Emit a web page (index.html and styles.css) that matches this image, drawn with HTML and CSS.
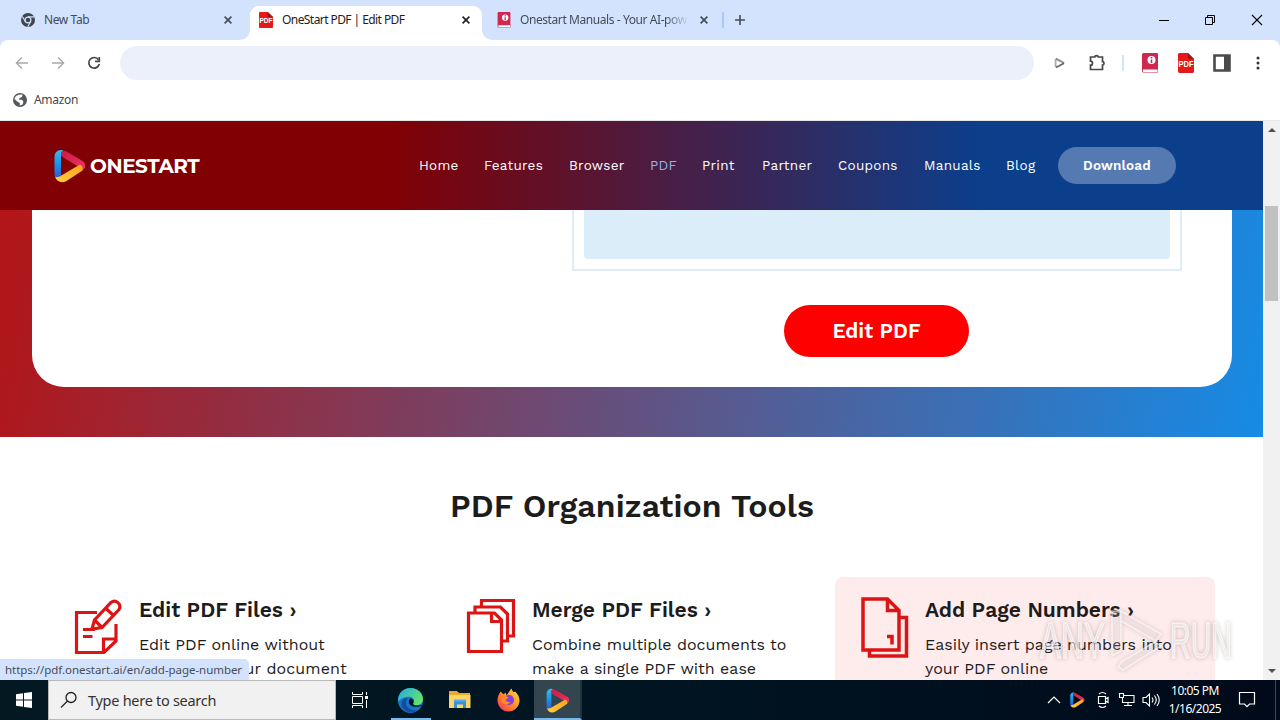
FILE: index.html
```html
<!DOCTYPE html>
<html lang="en">
<head>
<meta charset="utf-8">
<title>OneStart PDF | Edit PDF</title>
<link rel="stylesheet" href="styles.css">
</head>
<body>
<svg class="defs" width="0" height="0">
  <defs>
    <linearGradient id="lb" x1="0" y1="0" x2="0" y2="1"><stop offset="0" stop-color="#3cb8e8"/><stop offset=".5" stop-color="#1595ee"/><stop offset="1" stop-color="#3b4fc0"/></linearGradient>
    <linearGradient id="lr" x1="0" y1="0" x2="1" y2="1"><stop offset="0" stop-color="#c81a4c"/><stop offset="1" stop-color="#f0345c"/></linearGradient>
    <linearGradient id="ly" x1="0" y1="1" x2="1" y2="0"><stop offset="0" stop-color="#ffd23e"/><stop offset="1" stop-color="#ff9f1e"/></linearGradient>
    <symbol id="onestart" viewBox="0 0 32 34">
      <path d="M7 1C3 1 .5 4 .5 8v17c0 3 2 5.500 5 5L7 26V6c0-2 1-3.500 3-3.800C9 1.300 8 1 7 1z" fill="url(#lb)"/>
      <path d="M7 7V3.500C8 1.500 10.500 1.400 12.500 2.600L28.500 12c3 2 3.500 6 1 8.500L26 18.500 7 7z" fill="url(#lr)"/>
      <path d="M1 27.500c1.500 1 4 .5 5.500-.5L26 15.500c2 1.200 3.500 3.500 2.500 6L12.500 32C8 34.500 2.500 33 1 27.500z" fill="url(#ly)"/>
    </symbol>
    <symbol id="pdf" viewBox="0 0 16 18" preserveAspectRatio="none"><path d="M0 1.500C0 .5.500 0 1.500 0H10l6 5.500v11c0 1-.5 1.500-1.500 1.500h-13C.5 18 0 17.500 0 16.500z" fill="#e51a18"/><path d="M10 0l6 5.500h-6z" fill="#a90f10"/><text x="8" y="12.500" text-anchor="middle" class="pdf-label">PDF</text></symbol>
    <symbol id="book" viewBox="0 0 16 20"><path d="M1.500 0H15q1 0 1 1v18.500H1.500Q0 19.500 0 18V1.500Q0 0 1.500 0z" fill="#cf2850"/><path d="M1 16.500h14.500V19H1z" fill="#fff"/><circle cx="9.500" cy="7" r="4" fill="#fff"/><path d="M9.500 4v1.500M9.500 6.500V10" stroke="#cf2850" stroke-width="1.600"/></symbol>
    <symbol id="x" viewBox="0 0 10 10"><path d="M1.600 1.600l6.800 6.800M8.400 1.600L1.600 8.400" stroke="currentColor" stroke-width="1.600"/></symbol>
  </defs>
</svg>
<div class="screen">
  <div class="tabs">
    <div class="tab tab-first">
      <svg class="ico14" viewBox="0 0 14 14"><circle cx="7" cy="7" r="7" fill="#3f464f"/><circle cx="7" cy="7" r="2.900" fill="#3f464f" stroke="#d3e3fd" stroke-width="1.200"/><path d="M7 3.900h6.300M4.300 8.500L1.300 3.500M9.700 8.500l-3 5.300" stroke="#d3e3fd" stroke-width="1.100"/></svg>
      <span class="tab-title t-new">New Tab</span><svg class="close"><use href="#x"/></svg>
    </div>
    <div class="tab tab-active">
      <svg class="fav"><use href="#pdf"/></svg>
      <span class="tab-title t-pdf">OneStart PDF | Edit PDF</span><svg class="close"><use href="#x"/></svg>
    </div>
    <div class="tab tab-last">
      <svg class="fav"><use href="#book"/></svg>
      <span class="tab-title t-man">Onestart Manuals - Your AI-pow</span><svg class="close"><use href="#x"/></svg>
    </div>
    <div class="tab-sep"></div>
    <svg class="plus" viewBox="0 0 12 12"><path d="M6 1v10M1 6h10" stroke="#444a53" stroke-width="1.600"/></svg>
    <div class="winctl">
      <svg width="10" height="12"><path d="M0 6.500h10" stroke="#000"/></svg>
      <svg width="12" height="12" fill="none" stroke="#000"><path d="M1.500 3.500h7v7h-7zM3.500 3.500v-2h7v7h-2"/></svg>
      <svg width="12" height="12"><path d="M1 1l10 10M11 1L1 11" stroke="#000" stroke-width="1.100"/></svg>
    </div>
  </div>
  <div class="toolwrap"><div class="toolbar">
    <svg width="14" height="14" fill="none" stroke="#a9abae" stroke-width="1.500"><path d="M13 7H2M7 1.500L1.500 7 7 12.500"/></svg>
    <svg width="14" height="14" fill="none" stroke="#a9abae" stroke-width="1.500"><path d="M1 7h11M7 1.500L12.500 7 7 12.500"/></svg>
    <svg width="14" height="14" fill="none" stroke="#45474a" stroke-width="1.700"><path d="M11.500 3.800A5.300 5.300 0 1 0 12.300 8"/><path d="M12.300 1v4.300H8"/></svg>
    <div class="omnibox"></div>
    <svg class="t-play" width="12" height="12" fill="none" stroke-width="1.800"><path d="M1.600 10V2" stroke="#aaa"/><path d="M1.800 1.600L10 6" stroke="#888"/><path d="M10 6.300L2 10.500" stroke="#666"/></svg>
    <svg class="t-puz" width="20" height="18" fill="none" stroke="#45474a" stroke-width="1.700"><path d="M2.500 3h4.300a1.700 1.300 0 0 1 3.400 0H14.500v4.600a1.500 1.700 0 0 1 0 3.400v4.500h-12v-4.300a2 2 0 0 0 0-4z"/></svg>
    <div class="tool-sep"></div>
    <svg class="t-book" width="16" height="20"><use href="#book"/></svg>
    <svg class="t-pdficon" width="16" height="20"><use href="#pdf"/></svg>
    <svg class="t-panel" width="18" height="18"><path d="M1.500 1.500h15v15h-15z" fill="#fff" stroke="#4a4a4a" stroke-width="2.600"/><path d="M11 1h6v16h-6z" fill="#4a4a4a"/></svg>
    <svg class="t-dots" width="4" height="14" fill="#333"><circle cx="2" cy="2" r="1.500"/><circle cx="2" cy="7" r="1.500"/><circle cx="2" cy="12" r="1.500"/></svg>
  </div></div>
  <div class="bookmarks">
    <svg class="ico14" viewBox="0 0 14 14"><circle cx="7" cy="7" r="7" fill="#55585c"/><path d="M5.500 1.700L9.500 1.500 9 4 6.500 5 6 6.700H9l1.500 2-1 2.800-2.700 1V10L4.500 8.700 1.500 6C1.700 4 3.500 2.300 5.500 1.700z" fill="#fff"/></svg>
    <span>Amazon</span>
  </div>
  <div class="view">
    <div class="page">
      <header class="header">
        <div class="brand"><svg class="logo"><use href="#onestart"/></svg><span>ONESTART</span></div>
        <nav class="nav">
          <a>Home</a><a>Features</a><a>Browser</a><a class="current">PDF</a><a>Print</a><a>Partner</a><a>Coupons</a><a>Manuals</a><a>Blog</a>
        </nav>
        <a class="download">Download</a>
      </header>
      <section class="hero">
        <div class="card">
          <div class="dropzone"><div class="dropfill"></div></div>
          <a class="edit">Edit PDF</a>
        </div>
      </section>
      <section class="tools">
        <h2><span>PDF Organization Tools</span></h2>
        <div class="grid">
          <div class="tool">
            <svg class="ti" width="50" height="60" fill="none" stroke="#dc1414" stroke-width="3.200"><path d="M24 14.500H3.500v40H31l12-11.500V26M30.500 54V41H43"/><path d="M10 31.500h12M10 38.500h9.500"/><path d="M19 31l2.500-9L38 4.500a5.400 5.400 0 0 1 8 7L29 29.500zM32.500 10l8.500 8M21.500 22l7.500 7.500"/></svg>
            <div><h3>Edit PDF Files ›</h3><p>Edit PDF online without<br><span class="wide">converting your document</span></p></div>
          </div>
          <div class="tool">
            <svg class="ti" width="50" height="60" fill="none" stroke="#dc1414" stroke-width="3.200"><path d="M2.500 15h26l7 7v31.500h-33zM25.500 15.500v8h10M9 14.500V9h25.500l7 7V43h-5M15.500 8.500V2.500h32V38h-5"/></svg>
            <div><h3>Merge PDF Files ›</h3><p>Combine multiple documents to<br>make a single PDF with ease</p></div>
          </div>
          <div class="tool hover">
            <svg class="ti num" width="50" height="62" fill="none" stroke="#dc1414" stroke-width="3.500"><path d="M4 2h24.500l11.500 11.500V53H4zM28.500 2v11.500H40M10.500 53v6H47.500V20.500H40" /><path d="M28 39.500h5v8"/></svg>
            <div><h3>Add Page Numbers ›</h3><p>Easily insert page numbers into<br>your PDF online</p></div>
          </div>
        </div>
      </section>
    </div>
    <div class="scroll">
      <svg width="8" height="5"><path d="M0 5l4-4 4 4z" fill="#505050"/></svg>
      <div class="thumb"></div>
      <svg class="down" width="8" height="5"><path d="M0 0l4 4 4-4z" fill="#505050"/></svg>
    </div>
    <div class="status">https://pdf.onestart.ai/en/add-page-number</div>
    <svg class="watermark" width="210" height="70">
      <text x="1" y="50" textLength="65" lengthAdjust="spacingAndGlyphs">ANY</text>
      <path d="M73 3v45l9-5V17l-1-13zM82 3l40 23-5 7-35-20zM82 54l34-20 6 4-38 24-5-3z"/>
      <text x="131" y="50" textLength="62" lengthAdjust="spacingAndGlyphs">RUN</text>
    </svg>
  </div>
  <div class="taskbar">
    <div class="start"><svg width="16" height="16" fill="#fff"><path d="M0 2.200L7 1.200V7.500H0zM8 1l8-1v7.500H8zM0 8.500h7v6.300L0 13.800zM8 8.500h8V16l-8-1.100z"/></svg></div>
    <div class="search"><svg width="18" height="18" fill="none" stroke="#222" stroke-width="1.300"><circle cx="11" cy="6.500" r="5"/><path d="M7.500 10L1 16.500"/></svg><span>Type here to search</span></div>
    <div class="tk view-btn"><svg width="18" height="16" fill="none" stroke="#fff"><path d="M1.500 4.500h10v7h-10zM1.500 0v2.500h10V0M1.500 16v-2.500h10V16M15.500 0v3M15.500 8v8"/><path d="M14 4h3v3h-3z" fill="#fff" stroke="none"/></svg></div>
    <div class="tk run"><svg width="25" height="25" viewBox="0 0 24 24"><defs><linearGradient id="eg" x1="0" y1="0" x2="1" y2=".5"><stop offset="0" stop-color="#25a8e8"/><stop offset="1" stop-color="#63e36b"/></linearGradient></defs><circle cx="12" cy="12" r="12" fill="#1477cc"/><path d="M.2 10C1 4 6 0 12 0c7 0 12 5 12 10.500 0 4-3 6-6.500 6-2.500 0-3.500-1-2.500-2.500 1.500-3-1-5.500-4.500-5.500C5 8.500 1 11 .2 14z" fill="url(#eg)"/><path d="M9.500 9.500c-5 6 .5 13 9 12-8 5-17-1-15-8 .8-2.500 3-4 6-4z" fill="#174b9c"/><path d="M11.500 10c-3 4 0 10 10.500 7.500l1-1.500c-2 1-6 1.200-8 0-1-.7-.5-1.400 0-2.300.7-2-1.500-4-3.500-3.700z" fill="#061923"/></svg></div>
    <div class="tk"><svg width="22" height="20"><path d="M0 1h8l2 2h11v5H0z" fill="#e9a92c"/><path d="M0 5h21.500v13H0z" fill="#fbd566"/><path d="M5 18v-7.500h12V18h-3v-3.500H8V18z" fill="#3a8fd6"/><path d="M5 9.500h12v2H5z" fill="#55aee8"/></svg></div>
    <div class="tk"><svg width="23" height="24" viewBox="0 0 24 24"><defs><linearGradient id="fg" x1="1" y1="0" x2="0" y2="1"><stop offset="0" stop-color="#ffe14a"/><stop offset=".45" stop-color="#ff9526"/><stop offset="1" stop-color="#fb2a55"/></linearGradient></defs><path d="M4 3l2.500 3L9 4.500 10 7l5-7 2 4 2-1c3 3 4.500 6 4.500 9.500C23.500 19 18 24 12 24S.5 19 .5 12.500C.5 9 2 5 4 3z" fill="url(#fg)"/><circle cx="12.500" cy="12" r="5.300" fill="#8440d8"/><path d="M5 7c3 0 5 1.500 7 2.500L9 12c1 2 3 2.500 5 2-2 4-8 3-9-1z" fill="#ff8a25"/></svg></div>
    <div class="tk active"><svg width="24" height="25"><use href="#onestart"/></svg></div>
    <div class="tray">
      <svg width="14" height="8" fill="none" stroke="#fff" stroke-width="1.200"><path d="M1 7l6-6 6 6"/></svg>
      <svg class="tr-one" width="15" height="16"><use href="#onestart"/></svg>
      <svg class="tr-cam" width="14" height="18" fill="none" stroke="#fff" stroke-width="1.200"><path d="M2.500 5.500h7v7h-7zM9.500 8l2.500-1.500v5L9.500 10M3 3q3.500-3 7 0M3 15q3.500 3 7 0"/></svg>
      <svg class="tr-net" width="17" height="16" fill="none" stroke="#fff" stroke-width="1.100"><path d="M6 3.500h10v7H4.500V6M1.500 1.500h4v4h-4zM10 10.500v3M6 13.500h8"/></svg>
      <svg class="tr-vol" width="18" height="16" fill="none" stroke="#fff" stroke-width="1.100"><path d="M1 5.500h3L7.500 2v12L4 10.500H1zM10 5.500q2 2.500 0 5M12.500 3.500q3.500 4.500 0 9M15 2q4.500 6 0 12"/></svg>
      <div class="clock"><span>10:05 PM</span><span>1/16/2025</span></div>
      <svg class="tr-note" width="18" height="18" fill="none" stroke="#fff" stroke-width="1.200"><path d="M1.500 1.500h15v11.500h-5L9 15.700 6.500 13h-5z"/></svg>
      <div class="peek"></div>
    </div>
  </div>
</div>
</body>
</html>
```
FILE: styles.css
```css
* { box-sizing: border-box; }
body { margin: 0; font-family: "Noto Sans", "Open Sans", sans-serif; }
.defs { position: absolute; }
svg { display: block; flex: none; }
.screen { width: 1280px; height: 720px; display: flex; flex-direction: column; overflow: hidden; background: #fff; }
.pdf-label { font: bold 7.500px "Liberation Sans", sans-serif; fill: #fff; }

/* browser chrome */
.tabs { height: 40px; background: linear-gradient(90deg, #d3e3fd 240px, #fff 240px, #fff 492px, #d3e3fd 492px); display: flex; align-items: center; }
.tab { height: 40px; display: flex; align-items: center; font-size: 12px; color: #454b56; }
.tab-first { width: 250px; padding-left: 21px; background: #d3e3fd; border-bottom-right-radius: 10px; }
.tab-active { width: 232px; background: radial-gradient(circle at 10px 16px, #fff 10px, #d3e3fd 10.500px) 0 0 / 10px 16px no-repeat, radial-gradient(circle at 0 16px, #fff 10px, #d3e3fd 10.500px) 100% 0 / 10px 16px no-repeat, linear-gradient(#d3e3fd 6px, #fff 6px); padding: 0 11px 0 9px; color: #1f2023; }
.tab-last { width: 228px; padding-left: 15px; background: #d3e3fd; border-bottom-left-radius: 10px; }
.ico14 { width: 14px; height: 14px; }
.tab-title { white-space: nowrap; overflow: hidden; flex: none; padding-bottom: 1px; }
.t-new { width: 179px; margin-left: 9px; letter-spacing: -.4px; }
.t-pdf { width: 179px; margin-left: 9px; letter-spacing: -.57px; }
.t-man { width: 169px; margin-left: 9px; margin-right: 10px; letter-spacing: -.42px; -webkit-mask-image: linear-gradient(90deg, #000 86%, transparent); mask-image: linear-gradient(90deg, #000 86%, transparent); }
.fav { width: 14px; height: 16px; }
.close { width: 10px; height: 10px; }
.tab-sep { width: 2px; height: 16px; background: #a8c7fa; margin-left: 12px; border-radius: 1px; }
.plus { width: 12px; height: 12px; margin-left: 10px; }
.winctl { margin-left: auto; display: flex; align-items: center; gap: 35px; padding-right: 17px; }
.toolwrap { background: #d3e3fd; }
.toolbar { height: 46px; display: flex; align-items: center; padding-left: 15px; background: #fff; border-radius: 8px 8px 0 0; }
.toolbar svg + svg { margin-left: 22px; }
.omnibox { width: 914px; height: 34px; border-radius: 17px; background: #ebf0fa; margin-left: 19px; }
.t-play { margin-left: 20px; }
.toolbar .t-puz { margin-left: 22px; }
.tool-sep { width: 2px; height: 16px; background: #d3e3fd; margin-left: 14px; }
.t-book { margin-left: 18px; }
.toolbar .t-pdficon { margin-left: 20px; }
.toolbar .t-panel { margin-left: 19px; }
.toolbar .t-dots { margin-left: 25px; }
.bookmarks { height: 35px; display: flex; align-items: center; gap: 7px; padding: 0 0 7px 13px; font-size: 12px; color: #44474b; border-bottom: 1px solid #e6e6e8; letter-spacing: -.3px; }

/* page */
.view { height: 559px; display: flex; position: relative; }
.page { width: 1263px; height: 559px; overflow: hidden; font-family: "Work Sans", Inter, sans-serif; color: #1c1c1c; }
.header { height: 89px; display: flex; align-items: center; background: linear-gradient(90deg, #800004 31%, #0b3f8c 78%); color: #fff; padding-left: 53px; }
.brand { width: 366px; display: flex; align-items: center; gap: 4px; font: 700 20px Montserrat, Inter, sans-serif; }
.brand span { letter-spacing: -.45px; }
.logo { width: 32px; height: 34px; margin-left: 1px; }
.nav { display: grid; grid-template-columns: 65px 85px 81px 52px 60px 76px 86px 82px 52px; font-size: 13.500px; letter-spacing: .28px; padding-bottom: 2px; }
.current { color: #8db4f0; }
.download { width: 118px; height: 37px; border-radius: 19px; background: #5579b1; display: flex; align-items: center; justify-content: center; font-weight: 600; font-size: 13.500px; letter-spacing: .2px; padding-bottom: 1px; }
.hero { height: 227px; padding: 0 31px 50px 32px; background: linear-gradient(100deg, #b31517, #168be5); }
.card { height: 177px; background: #fff; border-radius: 0 0 32px 32px; padding: 0 50px 0 540px; display: flex; flex-direction: column; align-items: center; }
.dropzone { width: 610px; height: 61px; border: 2px solid #dfedf6; border-top: 0; padding: 0 10px 10px; }
.dropfill { height: 49px; background: #dbedf9; border-radius: 0 0 4px 4px; }
.edit { margin-top: 34px; margin-right: 1px; width: 185px; height: 52px; border-radius: 26px; background: #f00; color: #fff; display: flex; align-items: center; justify-content: center; font-size: 20.800px; font-weight: 600; }
.tools h2 { margin: 0; height: 140px; padding: 0 0 2px 1px; display: flex; align-items: center; justify-content: center; font-size: 32px; font-weight: 600; line-height: 38px; letter-spacing: .1px; }
.grid { display: grid; grid-template-columns: 380px 380px 380px; gap: 13px; padding-left: 49px; height: 103px; }
.tool { display: flex; gap: 16px; padding: 19px 0 0 24px; height: 150px; border-radius: 8px; }
.hover { background: #feebec; }
.ti { margin-top: 2px; }
.num { margin-top: 1px; }
h3 { margin: 0; font-size: 21px; font-weight: 600; line-height: 27px; white-space: nowrap; }
.tool p { margin: 10px 0 0; font-size: 16px; line-height: 24px; white-space: nowrap; }
.wide { letter-spacing: .11px; }
.scroll { width: 17px; background: #f1f1f1; display: flex; flex-direction: column; align-items: center; padding-top: 6px; }
.thumb { width: 13px; height: 95px; margin-top: 74px; background: #c1c1c1; }
.down { margin-top: auto; margin-bottom: 6px; }
.status { position: absolute; left: 0; bottom: 0; width: 249px; height: 21px; background: #d3e3fd; border-top-right-radius: 5px; font-size: 11.500px; letter-spacing: -.05px; line-height: 21px; padding-left: 5px; color: #474d57; white-space: nowrap; }
.watermark { position: absolute; left: 1039px; top: 487px; font: 50px "Liberation Sans", sans-serif; fill: rgba(255,255,255,.5); stroke: rgba(255,255,255,.6); stroke-width: 1.500px; filter: drop-shadow(0 0 2px rgba(90,60,60,.45)); }
.watermark path { fill: rgba(255,255,255,.15); }

/* taskbar */
.taskbar { height: 40px; display: flex; background: linear-gradient(90deg, #031821, #001522 50%, #000a1a); color: #fff; }
.start { width: 48px; display: flex; align-items: center; justify-content: center; }
.search { width: 288px; background: #f1f1f1; border: 1px solid #b8b8b8; display: flex; align-items: center; gap: 10px; padding-left: 11px; color: #333; font-size: 14.500px; letter-spacing: -.28px; }
.tk { width: 49px; display: flex; align-items: center; justify-content: center; }
.view-btn { padding-right: 1px; }
.run { background: linear-gradient(#76b9ed, #76b9ed) 50% 100% / 40px 2px no-repeat; margin-left: 1px; }
.active { width: 48px; margin-left: 1px; background: #33464f; border-bottom: 2px solid #76b9ed; border-right: 2px solid #1b3440; padding: 2px 0 0 1px; }
.tray { margin-left: auto; display: flex; align-items: center; }
.tr-one { margin-left: 9px; }
.tr-cam { margin-left: 11px; }
.tr-net { margin-left: 8px; }
.tr-vol { margin-left: 7px; }
.clock { width: 70px; display: flex; flex-direction: column; align-items: center; font-size: 12px; line-height: 18px; letter-spacing: -.5px; }
.tr-note { margin-left: 8px; }
.peek { width: 1px; height: 40px; background: #3c4755; margin-left: 19px; margin-right: 4px; }
```
